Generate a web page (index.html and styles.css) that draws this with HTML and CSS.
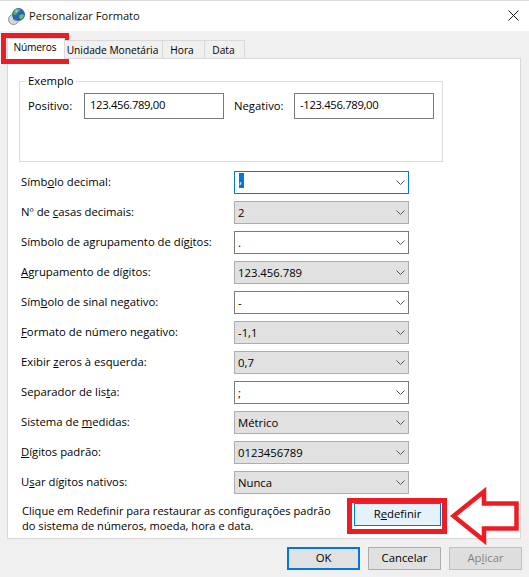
FILE: index.html
```html
<!DOCTYPE html>
<html lang="pt">
<head>
<meta charset="utf-8">
<title>Personalizar Formato</title>
<link rel="stylesheet" href="styles.css">
</head>
<body>
<div class="dialog">
  <header class="titlebar">
    <svg class="app-icon" width="18" height="18" viewBox="0 0 18 18">
      <circle cx="5.500" cy="12.500" r="5" fill="#d4d8da" stroke="#8b9297" stroke-width="1"/>
      <path d="M5.500 9.500v3l2 1" fill="none" stroke="#6d7479" stroke-width="1"/>
      <circle cx="10.500" cy="7.500" r="6.500" fill="#2b62b8"/>
      <path d="M7 2.500c2-1 4-1 5.500 0l-1 2-2 .5-.5 2-2.500 1.500L5 6.500z" fill="#5fb04a"/>
      <path d="M11.500 8l3.500-1 1 2-2.500 3.500-2-1z" fill="#6fbf5c"/>
      <circle cx="8.500" cy="4" r="1.500" fill="#a6d3f2" opacity=".7"/>
    </svg>
    <span class="title">Personalizar Formato</span>
    <svg class="close" width="11" height="11" viewBox="0 0 11 11"><path d="M.5.5l10 10M10.500.5l-10 10" stroke="#111" stroke-width="1" fill="none"/></svg>
  </header>
  <main class="body">
    <nav class="tabs">
      <div class="tab tab-active">Números</div>
      <div class="tab tab-money">Unidade Monetária</div>
      <div class="tab tab-hora">Hora</div>
      <div class="tab tab-data">Data</div>
    </nav>
    <section class="panel">
      <fieldset class="example">
        <legend>Exemplo</legend>
        <div class="example-row">
          <span class="ex-label ex-label-pos">Positivo:</span>
          <div class="ex-value">123.456.789,00</div>
          <span class="ex-label ex-label-neg">Negativo:</span>
          <div class="ex-value">-123.456.789,00</div>
        </div>
      </fieldset>
      <div class="rows">
        <div class="row"><span class="label">Símb<u>o</u>lo decimal:</span><div class="select focus"><span class="sel-text">,</span><svg class="chev" viewBox="0 0 9 5"><path d="M.5.5L4.500 4.500 8.500.5" fill="none" stroke="#555" stroke-width="1"/></svg></div></div>
        <div class="row"><span class="label">Nº de <u>c</u>asas decimais:</span><div class="select gray">2<svg class="chev" viewBox="0 0 9 5"><path d="M.5.5L4.500 4.500 8.500.5" fill="none" stroke="#555" stroke-width="1"/></svg></div></div>
        <div class="row"><span class="label">Símbolo de agrupamento de díg<u>i</u>tos:</span><div class="select">.<svg class="chev" viewBox="0 0 9 5"><path d="M.5.5L4.500 4.500 8.500.5" fill="none" stroke="#555" stroke-width="1"/></svg></div></div>
        <div class="row"><span class="label"><u>A</u>grupamento de dígitos:</span><div class="select gray">123.456.789<svg class="chev" viewBox="0 0 9 5"><path d="M.5.5L4.500 4.500 8.500.5" fill="none" stroke="#555" stroke-width="1"/></svg></div></div>
        <div class="row"><span class="label">Sím<u>b</u>olo de sinal negativo:</span><div class="select">-<svg class="chev" viewBox="0 0 9 5"><path d="M.5.5L4.500 4.500 8.500.5" fill="none" stroke="#555" stroke-width="1"/></svg></div></div>
        <div class="row"><span class="label"><u>F</u>ormato de número negativo:</span><div class="select gray">-1,1<svg class="chev" viewBox="0 0 9 5"><path d="M.5.5L4.500 4.500 8.500.5" fill="none" stroke="#555" stroke-width="1"/></svg></div></div>
        <div class="row"><span class="label">Exibir <u>z</u>eros à esquerda:</span><div class="select gray">0,7<svg class="chev" viewBox="0 0 9 5"><path d="M.5.5L4.500 4.500 8.500.5" fill="none" stroke="#555" stroke-width="1"/></svg></div></div>
        <div class="row"><span class="label">Separador de lis<u>t</u>a:</span><div class="select">;<svg class="chev" viewBox="0 0 9 5"><path d="M.5.5L4.500 4.500 8.500.5" fill="none" stroke="#555" stroke-width="1"/></svg></div></div>
        <div class="row"><span class="label">Sistema de <u>m</u>edidas:</span><div class="select gray">Métrico<svg class="chev" viewBox="0 0 9 5"><path d="M.5.5L4.500 4.500 8.500.5" fill="none" stroke="#555" stroke-width="1"/></svg></div></div>
        <div class="row"><span class="label"><u>D</u>ígitos padrão:</span><div class="select gray">0123456789<svg class="chev" viewBox="0 0 9 5"><path d="M.5.5L4.500 4.500 8.500.5" fill="none" stroke="#555" stroke-width="1"/></svg></div></div>
        <div class="row"><span class="label">U<u>s</u>ar dígitos nativos:</span><div class="select gray">Nunca<svg class="chev" viewBox="0 0 9 5"><path d="M.5.5L4.500 4.500 8.500.5" fill="none" stroke="#555" stroke-width="1"/></svg></div></div>
      </div>
      <div class="reset-row">
        <p class="reset-text">Clique em Redefinir para restaurar as configurações padrão<br>do sistema de números, moeda, hora e data.</p>
        <div class="btn btn-reset">R<u>e</u>definir</div>
      </div>
    </section>
    <footer class="footer">
      <div class="btn btn-ok">OK</div>
      <div class="btn">Cancelar</div>
      <div class="btn btn-off">Ap<u>l</u>icar</div>
    </footer>
  </main>
  <div class="mark mark-tab"></div>
  <div class="mark mark-reset"></div>
  <svg class="arrow" width="72" height="58" viewBox="0 0 72 58"><path d="M3.500 29L34 4.500V16.500H66.500V41.500H34V53.500z" fill="none" stroke="#ed1c24" stroke-width="4.500" stroke-linejoin="miter"/></svg>
</div>
</body>
</html>
```

FILE: styles.css
```css
* { box-sizing: border-box; }
html, body { margin: 0; padding: 0; }
body {
  width: 529px;
  height: 577px;
  overflow: hidden;
  font-family: "Open Sans", "Noto Sans", sans-serif;
  font-size: 11.300px;
  color: #000;
  background: #f0f0f0;
}
u { text-underline-offset: 1px; text-decoration-thickness: 1px; }
.dialog { position: relative; width: 529px; height: 577px; display: flex; flex-direction: column; }
.titlebar {
  height: 31px;
  flex: none;
  background: #fff;
  border-top: 1px solid #dcdcdc;
  display: flex;
  align-items: center;
  padding: 0 10px 1px 8px;
}
.app-icon { flex: none; margin-right: 3px; margin-top: 1px; }
.title { font-size: 11.100px; color: #111; flex: 1; }
.close { flex: none; }
.body { flex: 1; display: flex; flex-direction: column; padding: 9px 8px 0 7px; }
.tabs { display: flex; height: 18px; flex: none; position: relative; z-index: 1; font-size: 10.200px; }
.tab {
  height: 19px;
  border: 1px solid #d9d9d9;
  border-left: 0;
  background: #f0f0f0;
  line-height: 18px;
  text-align: center;
  white-space: nowrap;
}
.tab-active {
  width: 58px;
  height: 21px;
  margin-top: -2px;
  background: #fff;
  border-bottom: 0;
  border-left: 1px solid #d9d9d9;
  line-height: 17px;
  letter-spacing: -0.200px;
  text-indent: -2px;
}
.tab-money { width: 98px; text-indent: -2px; }
.tab-hora { width: 42px; text-indent: -3px; }
.tab-data { width: 40px; text-indent: -2px; }
.panel {
  height: 481px;
  flex: none;
  background: #fff;
  border: 1px solid #d9d9d9;
  padding: 15px 0 0 11px;
}
.example {
  width: 424px;
  min-width: 0;
  height: 88px;
  margin: 0;
  padding: 0 8px;
  border: 1px solid #dcdcdc;
}
.example legend { padding: 0 2px; margin-left: -2px; line-height: 14px; }
.example-row { display: flex; align-items: flex-start; margin-top: 5px; }
.ex-label { line-height: 26px; flex: none; }
.ex-label-pos { width: 56px; }
.ex-label-neg { width: 60px; margin-left: 10px; }
.ex-value {
  width: 140px;
  flex: none;
  height: 26px;
  border: 1px solid #7a7a7a;
  padding: 0 5px;
  line-height: 21px;
  letter-spacing: -0.350px;
}
.rows { display: flex; flex-direction: column; gap: 7px; margin-top: 9px; padding-left: 2px; }
.row { display: flex; align-items: center; height: 23px; }
.label { width: 213px; flex: none; margin-top: -3px; }
.select {
  position: relative;
  width: 175px;
  height: 23px;
  border: 1px solid #7a7a7a;
  background: #fff;
  line-height: 21px;
  padding-left: 3px;
}
.select.gray { background: #e1e1e1; border-color: #adadad; }
.select.focus { border-color: #0078d7; padding-left: 4px; }
.sel-text {
  display: inline-block;
  background: #0078d7;
  color: #fff;
  width: 5px;
  height: 15px;
  line-height: 13px;
  margin-top: 1px;
  vertical-align: top;
}
.chev { position: absolute; right: 3px; top: 8px; width: 9px; height: 5px; }
.reset-row { display: flex; margin-top: 5px; padding-left: 3px; }
.reset-text { margin: 0; width: 332px; line-height: 15px; flex: none; padding-top: 4px; font-size: 11.100px; }
.btn {
  width: 73px;
  height: 23px;
  border: 1px solid #adadad;
  background: #e1e1e1;
  text-align: center;
  line-height: 20px;
}
.btn-reset {
  width: 87px;
  margin-top: 4px;
  background: #e5f1fb;
  border-color: #0078d7;
}
.footer { display: flex; gap: 8px; justify-content: flex-end; margin-top: 8px; margin-right: -1px; }
.btn-ok { border: 2px solid #0078d7; line-height: 18px; }
.btn-off { color: #838383; background: #dedede; border-color: #bfbfbf; }
.mark { position: absolute; border: 5px solid #ed1c24; }
.mark-tab { left: 1px; top: 33px; width: 68px; height: 31px; }
.mark-reset { left: 347px; top: 498px; width: 100px; height: 36px; }
.arrow { position: absolute; left: 450px; top: 487px; }
```
